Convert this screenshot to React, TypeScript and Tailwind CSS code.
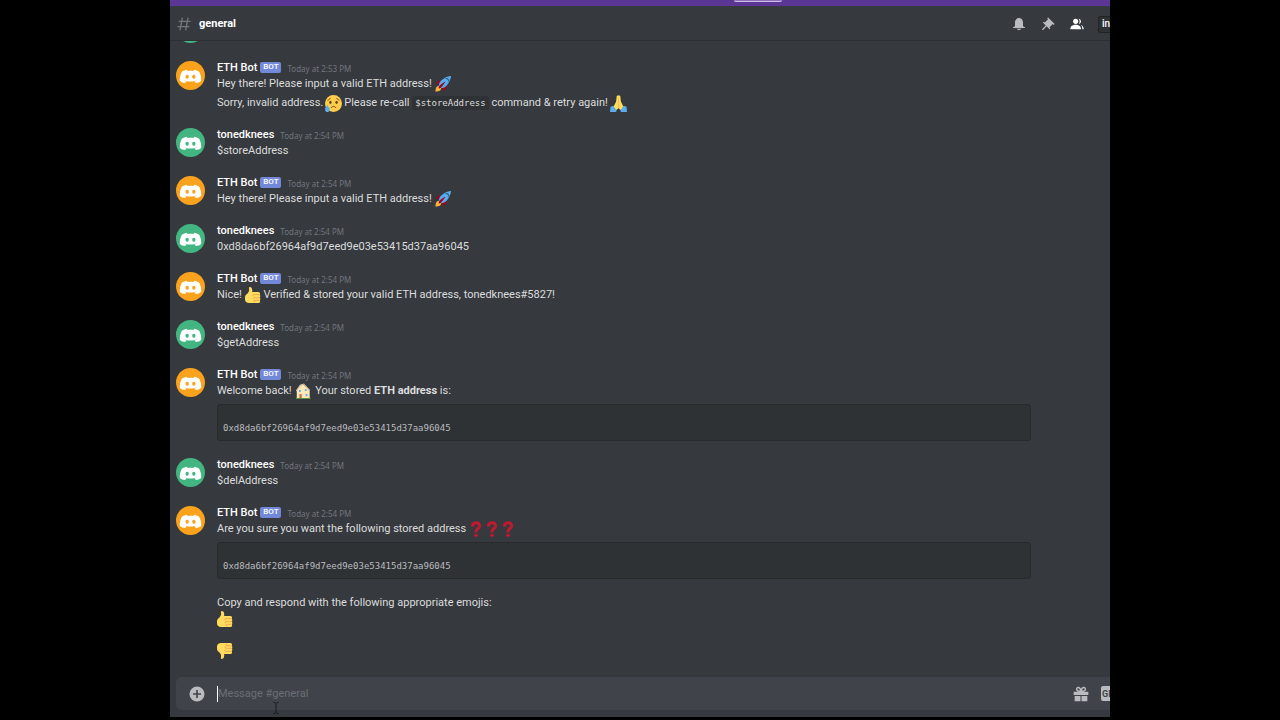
import type { ReactNode } from "react";

const ADDRESS = "0xd8da6bf26964af9d7eed9e03e53415d37aa96045";

const Avatar = ({ bot }: { bot?: boolean }) => (
  <svg
    viewBox="0 0 87 87"
    className={bot ? "mt-px mr-3 size-[29px] shrink-0 text-[#faa21b]" : "mt-px mr-3 size-[29px] shrink-0 text-[#43b581]"}
    aria-hidden="true"
  >
    <circle cx="43.5" cy="43.5" r="43.5" fill="currentColor" />
    <path
      transform="translate(10.5 26)"
      fill="#fff"
      d="M22 0C16 1 11 3 7 6C3 13 0 24 1 34C5 38 11 40 17 40L21 35C18 34 16 33 14 31C26 37 40 37 52 31C50 33 48 34 45 35L49 40C55 40 61 38 65 34C66 24 63 13 59 6C55 3 50 1 44 0L42 4C36 3 30 3 24 4Z"
    />
    <ellipse cx="33.5" cy="47" rx="5" ry="6" fill="currentColor" />
    <ellipse cx="53.5" cy="47" rx="5" ry="6" fill="currentColor" />
  </svg>
);

const Rocket = () => (
  <svg viewBox="0 0 36 36" className="size-4 shrink-0" role="img" aria-label="rocket">
    <path fill="#a0041e" d="M1 17l8-7 16 1 1 16-7 8s.001-5.999-6-12-12-6-12-6z" />
    <path fill="#ffac33" d="M.973 35s-.036-7.979 2.985-11S15 21.187 15 21.187 14.999 29 11.999 32c-3 3-11.026 3-11.026 3z" />
    <circle fill="#ffcc4d" cx="8.999" cy="27" r="4" />
    <path fill="#55acee" d="M35.999 0s-10 0-22 10c-6 5-6 14-4 16s11 2 16-4c10-12 10-22 10-22z" />
    <path fill="#292f33" d="M26 5c-1.600 0-2.900.8-3.800 2a5 5 0 016.900 6.900C30.300 13 31 11.600 31 10a5 5 0 00-5-5z" />
    <path fill="#a0041e" d="M8 28s0-4 1-5 13.001-10.999 14-10-9.001 13-10.001 14S8 28 8 28z" />
  </svg>
);

const SadFace = () => (
  <svg viewBox="0 0 36 36" className="mx-[2px] size-[17px] shrink-0" role="img" aria-label="sad face">
    <circle fill="#ffcc4d" cx="18" cy="18" r="18" />
    <ellipse fill="#664500" cx="11.500" cy="15.500" rx="2.500" ry="3.500" />
    <ellipse fill="#664500" cx="24.500" cy="15.500" rx="2.500" ry="3.500" />
    <path fill="none" stroke="#664500" strokeWidth="2" strokeLinecap="round" d="M6 11c3-1 4-2 5-4M30 11c-3-1-4-2-5-4M13 27c3-4 7-4 10 0" />
    <path fill="#5dadec" d="M10 30c0 3.500-2.200 6-5 6s-5-2.500-5-6 4-5 5-10c1 5 5 6.500 5 10z" />
  </svg>
);

const Pray = () => (
  <svg viewBox="0 0 36 36" className="ml-[2px] size-[17px] shrink-0" role="img" aria-label="folded hands">
    <path fill="#ffdc5d" d="M17 1c-2 0-3 1-3 3l-1 10-6 12 5 7 6-5 6 5 5-7-6-12-1-10c0-2-1-3-3-3z" />
    <path fill="none" stroke="#ef9645" strokeWidth="1" d="M18 5v23" />
    <path fill="#5dadec" d="M1 25l6-2 7 10-1 3H0zM35 25l-6-2-7 10 1 3h13z" />
  </svg>
);

const Thumb = ({ down }: { down?: boolean }) => (
  <svg viewBox="0 0 36 36" className="size-4 shrink-0" role="img" aria-label={down ? "thumbs down" : "thumbs up"}>
    <g transform={down ? "matrix(1 0 0 -1 0 36)" : undefined}>
      <path
        fill="#ffdb5e"
        d="M11 0c-2 0-2.500 2-2 4 1 5-1 8-4 11-3 2-5 4-5 9v4c0 5 4 8 9 8h20c3 0 5-1 5-4 0-1 0-2-1-2 2-1 2-5 0-6 2-1 2-5 0-6 2-2 1-7-3-7H16c1-4 0-11-5-11z"
      />
      <path fill="none" stroke="#ee9547" strokeWidth="1.600" d="M33 17H20c-3 0-3 3-1 4M34 24H21c-3 0-3 3-1 4M33 30H22c-3 0-2 4 0 5" />
    </g>
  </svg>
);

const House = () => (
  <svg viewBox="0 0 36 36" className="mx-px size-4 shrink-0" role="img" aria-label="house">
    <path fill="#5c913b" d="M2 33h33v3H2z" />
    <path fill="#ffe8b6" d="M4 17L12 6l6-4 15 15v17H4z" />
    <path fill="#d1c9a8" d="M11 4L2 17l2 2 8-11 7-5 13 15 2-2L20 1z" />
    <path fill="#c1694f" d="M10 25h5v9h-5z" />
    <path fill="#55acee" d="M9 16h4v4H9zM24 25h4v5h-4zM22 14h4v4h-4z" />
  </svg>
);

const Question = () => (
  <svg viewBox="0 0 36 36" className="size-4 shrink-0" role="img" aria-label="question mark">
    <path fill="none" stroke="#be1931" strokeWidth="7" strokeLinecap="round" d="M10 10c1-5 4-6 8-6 6 0 8 3 8 7 0 6-8 6-8 12" />
    <circle fill="#be1931" cx="18" cy="32" r="4" />
  </svg>
);

const Message = ({ bot, time = "2:54", children }: { bot?: boolean; time?: string; children: ReactNode }) => (
  <article className="flex shrink-0">
    <Avatar bot={bot} />
    <div className="min-w-0 flex-1">
      <header className="flex h-4 items-center">
        <h2 className="font-medium text-white">{bot ? "ETH Bot" : "tonedknees"}</h2>
        {bot && (
          <span className="mb-0.5 ml-[3px] flex h-[11px] w-[21px] items-center justify-center rounded-[2px] bg-[#7289da] text-[8px] font-medium text-white">
            BOT
          </span>
        )}
        <time className="ml-1.5 pt-px font-['Noto_Sans',sans-serif] text-[8px] leading-[14px] text-[#72767d]">Today at {time} PM</time>
      </header>
      {children}
    </div>
  </article>
);

const Line = ({ children }: { children: ReactNode }) => (
  <p className="flex h-4 items-center whitespace-pre">{children}</p>
);

const CodeBlock = () => (
  <pre className="mt-[5px] mr-[79px] rounded-[3px] border border-[#282b2e] bg-[#2f3235] px-[5px] pt-1 pb-[5px] font-['DejaVu_Sans_Mono',monospace] text-[9px] leading-[13px] text-[#b9bbbe]">
    {"\n" + ADDRESS}
  </pre>
);

export default function App() {
  return (
    <div className="h-screen bg-black px-[170px] pb-[3px] font-[Roboto,sans-serif] text-[11px] leading-4 text-[#dcddde]">
      <div className="flex h-full flex-col overflow-hidden bg-[#36393d]">
        <div className="h-1.5 shrink-0 bg-[#5b3694]">
          <div className="ml-[60%] h-0.5 w-12 rounded-b-[2px] border-b border-[#cdbfe0] bg-[#8d70b8]" />
        </div>

        <header className="z-10 flex h-[35px] shrink-0 items-center border-b border-[#2d3034] pt-0.5 pl-1.5">
          <svg viewBox="0 0 24 24" className="size-4" fill="none" stroke="#72767d" strokeWidth="2" aria-hidden="true">
            <path d="M9.500 2.500L6 21.500M18 2.500L14.500 21.500M4 8h18M2 16h18" />
          </svg>
          <h1 className="ml-[7px] font-bold text-white">general</h1>
          <nav className="ml-auto flex items-center gap-[13px] text-[#b9bbbe]">
            <button aria-label="Notifications">
              <svg viewBox="0 0 24 24" className="size-4" fill="currentColor">
                <path d="M18 9V14C18 15.657 19.344 17 21 17V18H3V17C4.656 17 6 15.657 6 14V9C6 5.686 8.686 3 12 3C15.314 3 18 5.686 18 9ZM12 21C10.524 21 9.248 20.190 8.555 19H15.445C14.752 20.190 13.476 21 12 21Z" />
              </svg>
            </button>
            <button aria-label="Pinned messages">
              <svg viewBox="0 0 24 24" className="size-4" fill="currentColor">
                <path d="M22 12L12.101 2.101L10.686 3.514L12.101 4.929L7.151 9.878V9.880L5.736 8.465L4.322 9.880L8.565 14.122L2.908 19.778L4.322 21.192L9.979 15.536L14.222 19.778L15.636 18.364L14.222 16.950L19.171 12H19.172L20.586 13.414L22 12Z" />
              </svg>
            </button>
            <button aria-label="Member list" className="text-white">
              <svg viewBox="0 0 24 24" className="size-4" fill="currentColor">
                <path d="M14 8.006C14 10.211 12.206 12.006 10 12.006C7.795 12.006 6 10.211 6 8.006C6 5.801 7.794 4.006 10 4.006C12.206 4.006 14 5.801 14 8.006ZM2 19.006C2 15.473 5.290 13.006 10 13.006C14.711 13.006 18 15.473 18 19.006V20.006H2V19.006Z" />
                <path d="M20 20.006H22V19.006C22 16.443 20.270 14.442 17.521 13.535C19.062 14.913 20 16.806 20 19.006V20.006Z" />
                <path d="M14.883 11.908C16.666 11.504 18 9.908 18 8.006C18 5.969 16.469 4.282 14.497 4.037C15.432 5.095 16 6.485 16 8.006C16 9.449 15.489 10.774 14.638 11.810C14.720 11.842 14.802 11.874 14.883 11.908Z" />
              </svg>
            </button>
            <button className="flex h-[17px] w-3 items-center justify-end rounded-l-[3px] border border-r-0 border-[#202225] bg-[#2f3235] text-[10px] font-medium text-white">
              in
            </button>
          </nav>
        </header>

        <main className="flex min-h-0 flex-1 flex-col justify-end gap-4 overflow-hidden pb-[18px] pl-1.5">
          {/* scrolled out of view except for the avatar's lower edge */}
          <div className="h-[31px] shrink-0">
            <Avatar />
          </div>
          <Message bot time="2:53">
            <Line>Hey there! Please input a valid ETH address! <Rocket /></Line>
            <div className="mt-[3px]">
              <Line>
                Sorry, invalid address.
                <SadFace />
                {"Please re-call "}
                <code className="rounded-[3px] bg-[#2f3235] px-[3px] font-['DejaVu_Sans_Mono',monospace] text-[9px] leading-[14px]">$storeAddress</code>
                {" command & retry again!"}
                <Pray />
              </Line>
            </div>
          </Message>
          <Message>
            <Line>$storeAddress</Line>
          </Message>
          <Message bot>
            <Line>Hey there! Please input a valid ETH address! <Rocket /></Line>
          </Message>
          <Message>
            <Line>{ADDRESS}</Line>
          </Message>
          <Message bot>
            <Line>Nice! <Thumb /> Verified &amp; stored your valid ETH address, tonedknees#5827!</Line>
          </Message>
          <Message>
            <Line>$getAddress</Line>
          </Message>
          <Message bot>
            <Line>Welcome back! <House /> Your stored <strong>ETH address</strong> is:</Line>
            <CodeBlock />
          </Message>
          <Message>
            <Line>$delAddress</Line>
          </Message>
          <Message bot>
            <Line>
              <span className="mr-0.5">Are you sure you want the following stored address</span>
              <Question /><Question /><Question />
            </Line>
            <CodeBlock />
            <div className="mt-4">
              <Line>Copy and respond with the following appropriate emojis:</Line>
              <Line><Thumb /></Line>
            </div>
            <div className="mt-4">
              <Line><Thumb down /></Line>
            </div>
          </Message>
        </main>

        <footer className="relative mb-[7px] ml-1.5 flex h-[33px] shrink-0 items-center rounded-l-md bg-[#40444a] pl-[13px] text-[#b9bbbe]">
          <button aria-label="Attach a file">
            <svg viewBox="0 0 16 16" className="size-4">
              <circle cx="8" cy="8" r="7.500" fill="#b9bbbe" />
              <path d="M8 4v8M4 8h8" stroke="#40444b" strokeWidth="1.600" />
            </svg>
          </button>
          <span className="ml-3 h-4 w-px bg-white" />
          <input
            aria-label="Message #general"
            placeholder="Message #general"
            className="h-4 min-w-0 flex-1 bg-transparent outline-none placeholder:text-[#6a6e75]"
          />
          <button aria-label="Send a gift" className="mr-3">
            <svg viewBox="0 0 24 24" className="size-4">
              <path fill="#b9bbbe" d="M1 8.500h22v5H1zM2.500 15h8.700v8H2.500zM12.800 15h8.700v8h-8.700z" />
              <path fill="none" stroke="#b9bbbe" strokeWidth="2.200" d="M12 8C9 8 5.500 7.500 5.500 4.700C5.500 1 11 1 12 8ZM12 8C15 8 18.500 7.500 18.500 4.700C18.500 1 13 1 12 8Z" />
            </svg>
          </button>
          <button className="flex h-[15px] w-[9px] items-center overflow-hidden rounded-l-[2px] bg-[#b9bbbe] pl-px text-[9px] font-bold text-[#40444b]">
            GIF
          </button>
          {/* mouse pointer resting over the text box */}
          <svg viewBox="0 0 6 12" className="absolute top-[25px] left-[97px] h-3 w-1.5" fill="none" stroke="#17181a" aria-hidden="true">
            <path d="M0.500 0.500H2L3 1.500L4 0.500H5.500M3 1.500V10.500M0.500 11.500H2L3 10.500L4 11.500H5.500" />
          </svg>
        </footer>
      </div>
    </div>
  );
}
